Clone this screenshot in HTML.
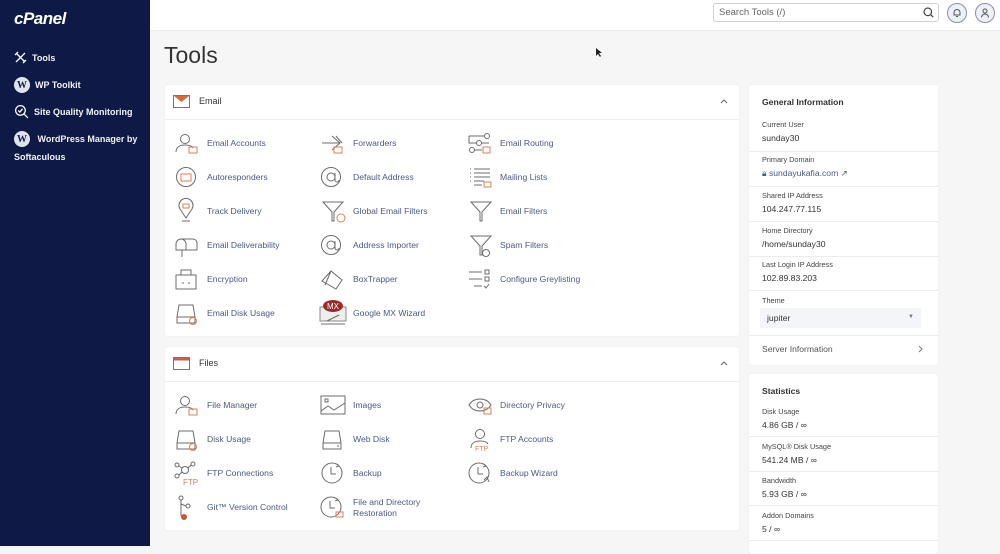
<!DOCTYPE html>
<html><head><meta charset="utf-8"><style>
*{margin:0;padding:0;box-sizing:border-box}
body{width:1000px;height:546px;overflow:hidden;background:#f6f6f7;font-family:"Liberation Sans",sans-serif;position:relative}
.a{position:absolute}
#sb{left:0;top:0;width:150px;height:546px;background:#0e1a45;color:#fff}
.nav{position:absolute;left:14px;font-size:9px;font-weight:bold;color:#f0f2f8;display:flex;align-items:center;gap:5px}
.wp{width:16px;height:16px;border-radius:50%;background:#dfe3ee;color:#0e1a45;font:bold 10px "Liberation Serif",serif;display:flex;align-items:center;justify-content:center}
#top{left:150px;top:0;width:850px;height:31px;background:#fff;border-bottom:1px solid #ececef}
.panel{background:#fff;border-radius:3px;box-shadow:0 0 2px rgba(0,0,0,.06)}
.it{position:absolute;font-size:8.6px;color:#4d5a80;white-space:nowrap}
.lbl{font-size:7.3px;color:#444;position:absolute;left:13px}
.val{font-size:8.6px;color:#333;position:absolute;left:13px}
.sep{position:absolute;left:0;width:189px;height:1px;background:#ececef}
</style></head><body>
<div id="sb" class="a">
 <div class="a" style="left:14px;top:9px;font:italic bold 17px 'Liberation Sans',sans-serif;letter-spacing:-0.5px;color:#fff">cPanel</div>
 <div class="nav" style="top:51px"><svg width="13" height="13" viewBox="0 0 13 13" fill="none" stroke="#fff" stroke-width="1.3"><path d="M2 2l9 9M11 2L2 11M1 4l3-3M9 12l3-3"/></svg>Tools</div>
 <div class="nav" style="top:77px"><span class="wp">W</span>WP Toolkit</div>
 <div class="nav" style="top:104px"><svg width="15" height="15" viewBox="0 0 14 14" fill="none" stroke="#fff" stroke-width="1.2"><circle cx="6" cy="6" r="4.5"/><path d="M9.5 9.5l3.5 3.5M4 6l1.5 1.5L8 4.5"/></svg>Site Quality Monitoring</div>
 <div class="nav" style="top:131px"><span class="wp">W</span>&nbsp;WordPress Manager by</div>
 <div class="nav" style="top:152px">Softaculous</div>
</div>
<div id="top" class="a"></div>
<div class="a" style="left:713px;top:3px;width:226px;height:19px;border:1px solid #cfd1d8;border-radius:3px;background:#fff;font-size:9.5px;color:#666;padding:3px 5px">Search Tools (/)
 <svg class="a" style="right:4px;top:3px" width="11" height="11" viewBox="0 0 11 11" fill="none" stroke="#444" stroke-width="1.2"><circle cx="4.8" cy="4.8" r="3.8"/><path d="M7.6 7.6l2.6 2.6"/></svg></div>
<div class="a" style="left:947px;top:3px;width:20px;height:20px;border:1.2px solid #8a8fb0;border-radius:50%;background:#eef0f7"></div>
<div class="a" style="left:975px;top:3px;width:20px;height:20px;border:1.2px solid #8a8fb0;border-radius:50%;background:#eef0f7"></div>
<svg class="a" style="left:952px;top:8px" width="10" height="10" viewBox="0 0 10 10" fill="none" stroke="#555" stroke-width="1"><path d="M2 7V4.5a3 3 0 016 0V7zM4 8.5h2"/></svg>
<svg class="a" style="left:980px;top:8px" width="10" height="10" viewBox="0 0 10 10" fill="none" stroke="#555" stroke-width="1"><circle cx="5" cy="3" r="2"/><path d="M1.5 9.5a3.5 3.5 0 017 0"/></svg>
<div class="a" style="left:164px;top:42px;font-size:23px;color:#333">Tools</div>

<div class="a panel" style="left:165px;top:85px;width:574px;height:251px"></div>
<div class="a" style="left:165px;top:119px;width:574px;height:1px;background:#eeeef1"></div>
<svg class="a" style="left:173px;top:95px" width="17" height="13" viewBox="0 0 17 13"><rect x=".5" y=".5" width="16" height="12" fill="#fff" stroke="#777"/><path d="M1 1h15L8.5 7z" fill="#d86a3a"/></svg>
<div class="a" style="left:199px;top:96px;font-size:9px;color:#333">Email</div>
<svg class="a" style="left:720px;top:99px" width="8" height="5" viewBox="0 0 8 5" fill="none" stroke="#666"><path d="M1 4l3-3 3 3"/></svg>

<div class="a panel" style="left:165px;top:347px;width:574px;height:183px"></div>
<div class="a" style="left:165px;top:381px;width:574px;height:1px;background:#eeeef1"></div>
<svg class="a" style="left:173px;top:357px" width="17" height="13" viewBox="0 0 17 13"><rect x=".5" y=".5" width="16" height="12" fill="#fff" stroke="#777"/><rect x="1" y="1" width="15" height="2.5" fill="#c9603a"/></svg>
<div class="a" style="left:199px;top:358px;font-size:9px;color:#333">Files</div>
<svg class="a" style="left:720px;top:361px" width="8" height="5" viewBox="0 0 8 5" fill="none" stroke="#666"><path d="M1 4l3-3 3 3"/></svg>

<svg class="a" style="left:0;top:0" width="1000" height="546" fill="none" stroke="#6c6c6c" stroke-width="1">
<defs>
<g id="person"><circle cx="10" cy="6" r="4.5"/><path d="M1 19c0-5 4-7 9-7s7 1 8 3"/><rect x="14" y="14" width="8" height="6" stroke="#d9825b"/></g>
<g id="circ"><circle cx="11" cy="10" r="9.5"/></g>
<g id="funnel"><path d="M1 1h20L12 11v9h-2v-9z"/></g>
<g id="disk"><path d="M3 2h14l2 12v6H1v-6zM1 14h18"/><circle cx="17" cy="18" r="3.5" stroke="#d9825b"/></g>
<g id="clock"><circle cx="11" cy="11" r="10"/><path d="M10 5v7h5"/><path d="M16 2l2 2-3 1" /></g>
</defs>
<use href="#person" x="175" y="133"/>
<g transform="translate(175,167)"><use href="#circ"/><rect x="6" y="7" width="10" height="7" stroke="#d9825b"/></g>
<g transform="translate(178,200)"><path d="M8 18L2 9a7 7 0 1112 0z"/><rect x="5" y="4" width="6" height="4" stroke="#d9825b"/><path d="M4 21h8"/></g>
<g transform="translate(174,235)"><path d="M2 9a5 5 0 0110 0v6H2zM7 4h12a4 4 0 014 4v7H12M8 15v7"/></g>
<g transform="translate(175,269)"><rect x="1" y="6" width="20" height="14"/><path d="M6 6V1h10v5M7 14h2M13 14h2"/></g>
<use href="#disk" x="176" y="303"/>
<g transform="translate(320,133)"><path d="M2 10h18M12 3l8 7-8 7M16 3l6 7"/><rect x="14" y="14" width="8" height="6" stroke="#d9825b"/></g>
<g transform="translate(320,167)"><use href="#circ"/><circle cx="11" cy="10" r="4"/><path d="M15 6v7a2 2 0 004 0"/></g>
<g transform="translate(322,201)"><use href="#funnel"/><circle cx="19" cy="17" r="4" stroke="#d9825b"/></g>
<g transform="translate(320,235)"><use href="#circ"/><circle cx="11" cy="10" r="4"/><path d="M15 6v7a2 2 0 004 0"/></g>
<g transform="translate(321,268)"><path d="M1 13L10 3l11 9-6 9zM10 3L4 17"/></g>
<g transform="translate(319,299)"><rect x="1" y="8" width="26" height="14" fill="#eee" stroke="#888"/><ellipse cx="14" cy="7" rx="10" ry="6" fill="#9b2a2a" stroke="none"/><text x="8" y="10" font-size="8" fill="#fff" stroke="none" font-family="Liberation Sans">MX</text><path d="M2 25h24M8 22l12-6"/></g>
<g transform="translate(468,133)"><circle cx="19" cy="3" r="2.5"/><circle cx="11" cy="10" r="2.5"/><circle cx="4" cy="17" r="2.5"/><path d="M1 3h16M1 3v7h8M13 10h8M7 17h7"/><rect x="15" y="14" width="7" height="6" stroke="#d9825b"/></g>
<g transform="translate(468,167)"><path d="M6 2h16M6 6h16M6 10h16M6 14h10M6 18h8M2 2h1M2 6h1M2 10h1M2 14h1"/><rect x="16" y="15" width="7" height="5" stroke="#d9825b"/></g>
<use href="#funnel" x="470" y="201"/>
<g transform="translate(470,235)"><use href="#funnel"/><circle cx="16" cy="18" r="3.5"/></g>
<g transform="translate(468,269)"><path d="M1 3h13M1 10h13M6 17h8"/><rect x="17" y="1" width="4" height="4"/><rect x="17" y="8" width="4" height="4"/><path d="M16 17l2 2 3-4"/></g>
<use href="#person" x="175" y="395"/>
<g transform="translate(320,395)"><rect x="1" y="1" width="24" height="18"/><path d="M1 16l7-5 6 4 11-7"/><rect x="5" y="4" width="3" height="3"/></g>
<g transform="translate(468,396)"><path d="M1 9c5-8 17-8 22 0-5 8-17 8-22 0z"/><circle cx="12" cy="9" r="3"/><rect x="16" y="12" width="7" height="6" stroke="#d9825b"/></g>
<use href="#disk" x="176" y="429"/>
<g transform="translate(322,429)"><path d="M3 2h14l2 12v6H1v-6zM1 14h18M15 17h2"/></g>
<g transform="translate(470,429)"><circle cx="10" cy="5" r="4.5"/><path d="M1 19c0-5 4-7 9-7s7 1 8 3"/><text x="5" y="22" font-size="7" fill="#d9825b" stroke="none" font-family="Liberation Sans">FTP</text></g>
<g transform="translate(174,462)"><circle cx="11" cy="8" r="3.5"/><circle cx="3" cy="3" r="2"/><circle cx="19" cy="2" r="2"/><circle cx="3" cy="14" r="2"/><path d="M5 4l3 2M17 3l-3 3M5 13l3-3"/><text x="9" y="23" font-size="8" fill="#d9825b" stroke="none" font-family="Liberation Sans">FTP</text></g>
<use href="#clock" x="321" y="462"/>
<g transform="translate(468,462)"><use href="#clock"/><path d="M16 18l3-3 2 5"/></g>
<g transform="translate(178,495)"><circle cx="3" cy="3" r="2"/><circle cx="10" cy="11" r="2"/><path d="M3 5v16M3 9l5 2"/><circle cx="6" cy="22" r="3" fill="#c9573a" stroke="none"/></g>
<g transform="translate(320,496)"><use href="#clock"/><rect x="16" y="16" width="7" height="5" stroke="#d9825b"/></g>
</svg>

<div class="it" style="left:207px;top:138px">Email Accounts</div>
<div class="it" style="left:207px;top:172px">Autoresponders</div>
<div class="it" style="left:207px;top:206px">Track Delivery</div>
<div class="it" style="left:207px;top:240px">Email Deliverability</div>
<div class="it" style="left:207px;top:274px">Encryption</div>
<div class="it" style="left:207px;top:308px">Email Disk Usage</div>
<div class="it" style="left:353px;top:138px">Forwarders</div>
<div class="it" style="left:353px;top:172px">Default Address</div>
<div class="it" style="left:353px;top:206px">Global Email Filters</div>
<div class="it" style="left:353px;top:240px">Address Importer</div>
<div class="it" style="left:353px;top:274px">BoxTrapper</div>
<div class="it" style="left:353px;top:308px">Google MX Wizard</div>
<div class="it" style="left:500px;top:138px">Email Routing</div>
<div class="it" style="left:500px;top:172px">Mailing Lists</div>
<div class="it" style="left:500px;top:206px">Email Filters</div>
<div class="it" style="left:500px;top:240px">Spam Filters</div>
<div class="it" style="left:500px;top:274px">Configure Greylisting</div>

<div class="it" style="left:207px;top:400px">File Manager</div>
<div class="it" style="left:207px;top:434px">Disk Usage</div>
<div class="it" style="left:207px;top:468px">FTP Connections</div>
<div class="it" style="left:207px;top:502px">Git™ Version Control</div>
<div class="it" style="left:353px;top:400px">Images</div>
<div class="it" style="left:353px;top:434px">Web Disk</div>
<div class="it" style="left:353px;top:468px">Backup</div>
<div class="it" style="left:353px;top:497px;line-height:10.5px">File and Directory<br>Restoration</div>
<div class="it" style="left:500px;top:400px">Directory Privacy</div>
<div class="it" style="left:500px;top:434px">FTP Accounts</div>
<div class="it" style="left:500px;top:468px">Backup Wizard</div>

<div class="a panel" style="left:749px;top:85px;width:189px;height:280px">
 <div class="a" style="left:13px;top:12px;font-size:8.6px;font-weight:bold;color:#333">General Information</div>
 <div class="lbl" style="top:35px">Current User</div><div class="val" style="top:48px">sunday30</div>
 <div class="sep" style="top:66px"></div>
 <div class="lbl" style="top:70px">Primary Domain</div><div class="val" style="top:83px;color:#4d5a80">&#128274;&#xFE0E; sundayukafia.com &#8599;</div>
 <div class="sep" style="top:101px"></div>
 <div class="lbl" style="top:106px">Shared IP Address</div><div class="val" style="top:119px">104.247.77.115</div>
 <div class="sep" style="top:136px"></div>
 <div class="lbl" style="top:141px">Home Directory</div><div class="val" style="top:154px">/home/sunday30</div>
 <div class="sep" style="top:171px"></div>
 <div class="lbl" style="top:175px">Last Login IP Address</div><div class="val" style="top:188px">102.89.83.203</div>
 <div class="sep" style="top:205px"></div>
 <div class="lbl" style="top:211px">Theme</div>
 <div class="a" style="left:11px;top:223px;width:161px;height:20px;background:#f4f5f8;font-size:8.6px;color:#333;padding:5px 7px">jupiter<span style="position:absolute;right:7px;top:6px;font-size:6px;color:#777">▼</span></div>
 <div class="sep" style="top:250px"></div>
 <div class="val" style="top:259px;color:#555">Server Information</div>
 <svg class="a" style="left:169px;top:260px" width="5" height="8" viewBox="0 0 5 8" fill="none" stroke="#777"><path d="M1 1l3 3-3 3"/></svg>
</div>
<div class="a panel" style="left:749px;top:374px;width:189px;height:180px">
 <div class="a" style="left:13px;top:12px;font-size:8.6px;font-weight:bold;color:#333">Statistics</div>
 <div class="lbl" style="top:33px">Disk Usage</div><div class="val" style="top:46px">4.86 GB / ∞</div>
 <div class="sep" style="top:62px"></div>
 <div class="lbl" style="top:68px">MySQL® Disk Usage</div><div class="val" style="top:81px">541.24 MB / ∞</div>
 <div class="sep" style="top:97px"></div>
 <div class="lbl" style="top:102px">Bandwidth</div><div class="val" style="top:115px">5.93 GB / ∞</div>
 <div class="sep" style="top:131px"></div>
 <div class="lbl" style="top:137px">Addon Domains</div><div class="val" style="top:150px">5 / ∞</div>
 <div class="sep" style="top:166px"></div>
</div>
<svg class="a" style="left:596px;top:48px" width="7" height="10" viewBox="0 0 7 10"><path d="M0 0v8l2-2 2 3 1-1-2-3h3z" fill="#222"/></svg>
</body></html>
